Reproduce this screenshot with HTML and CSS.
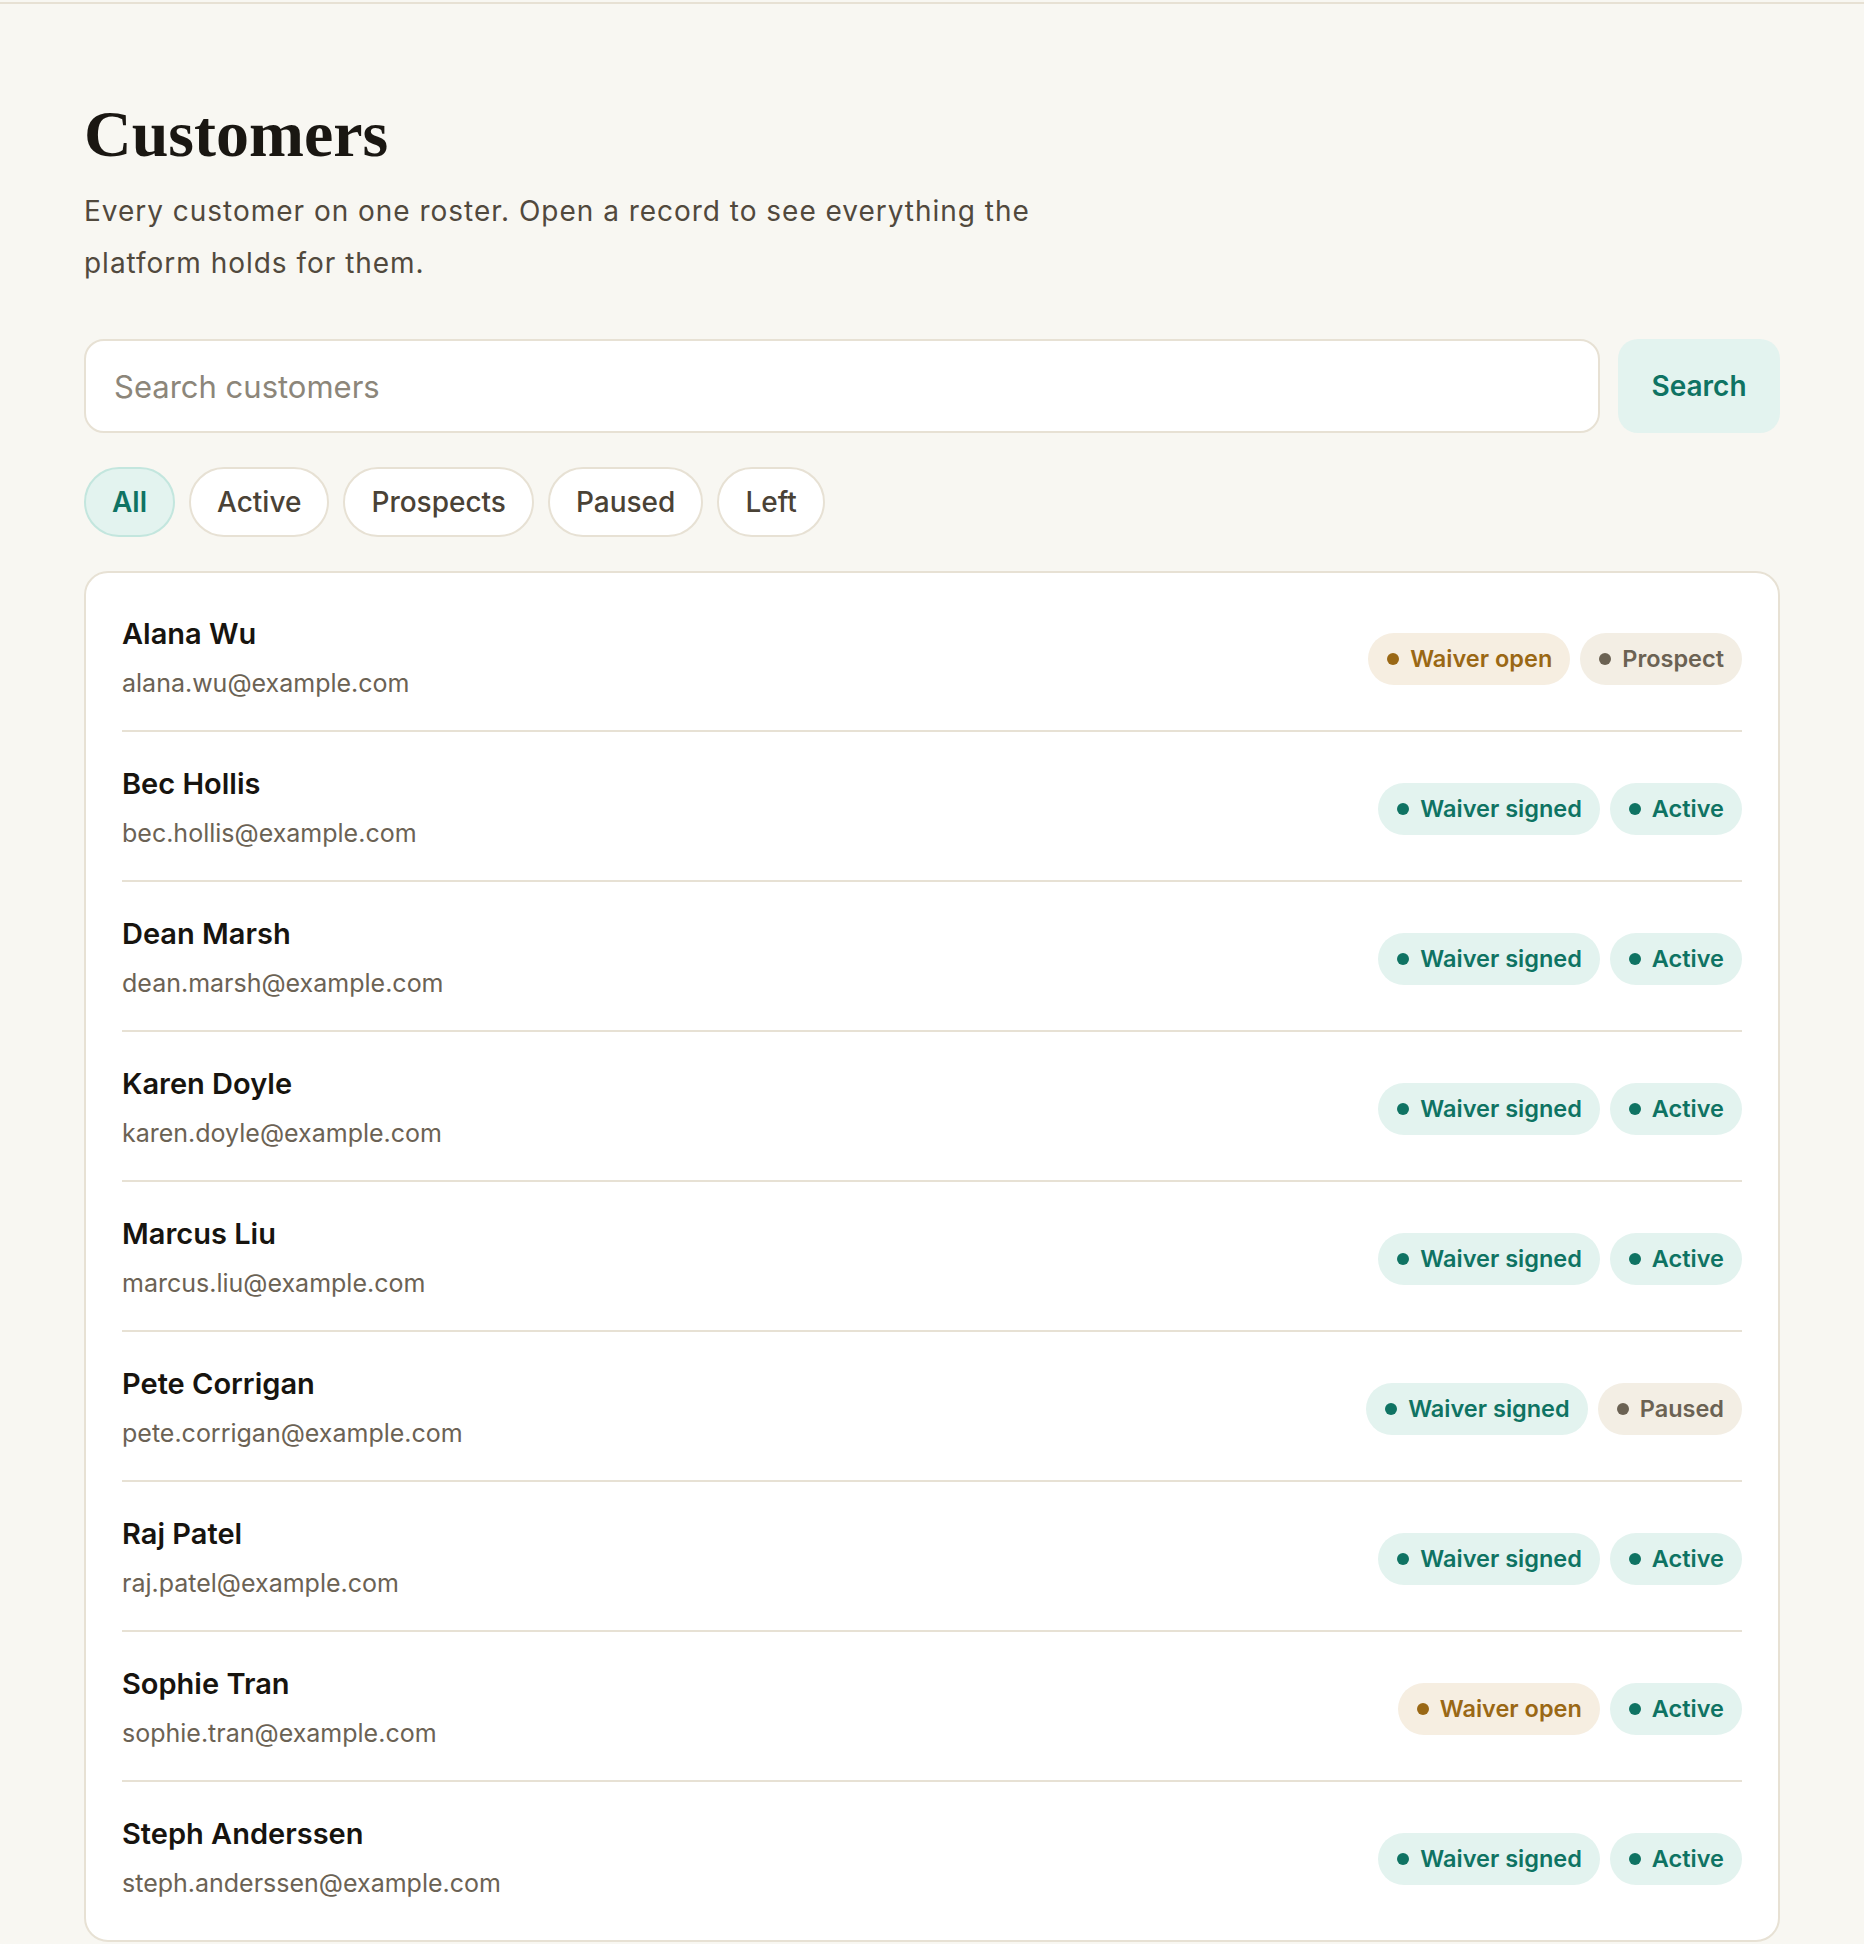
FILE: index.html
```html
<!DOCTYPE html>
<html lang="en">
<head>
  <meta charset="UTF-8" />
  <meta name="viewport" content="width=device-width, initial-scale=1.0" />
  <title>Customers</title>
  <link rel="stylesheet" href="styles.css">
</head>
<body>
  <div class="rule"></div>
  <main class="page">
    <h1>Customers</h1>
    <p class="lede">Every customer on one roster. Open a record to see everything the platform holds for them.</p>

    <form class="search" onsubmit="return false">
      <input type="text" placeholder="Search customers" />
      <button type="submit">Search</button>
    </form>

    <div class="filters">
      <button class="chip on">All</button>
      <button class="chip">Active</button>
      <button class="chip">Prospects</button>
      <button class="chip">Paused</button>
      <button class="chip">Left</button>
    </div>

    <ul class="roster">
      <li class="row">
        <div class="who"><div class="name">Alana Wu</div><div class="email">alana.wu@example.com</div></div>
        <div class="tags"><span class="tag warn">Waiver open</span><span class="tag muted">Prospect</span></div>
      </li>
      <li class="row">
        <div class="who"><div class="name">Bec Hollis</div><div class="email">bec.hollis@example.com</div></div>
        <div class="tags"><span class="tag ok">Waiver signed</span><span class="tag ok">Active</span></div>
      </li>
      <li class="row">
        <div class="who"><div class="name">Dean Marsh</div><div class="email">dean.marsh@example.com</div></div>
        <div class="tags"><span class="tag ok">Waiver signed</span><span class="tag ok">Active</span></div>
      </li>
      <li class="row">
        <div class="who"><div class="name">Karen Doyle</div><div class="email">karen.doyle@example.com</div></div>
        <div class="tags"><span class="tag ok">Waiver signed</span><span class="tag ok">Active</span></div>
      </li>
      <li class="row">
        <div class="who"><div class="name">Marcus Liu</div><div class="email">marcus.liu@example.com</div></div>
        <div class="tags"><span class="tag ok">Waiver signed</span><span class="tag ok">Active</span></div>
      </li>
      <li class="row">
        <div class="who"><div class="name">Pete Corrigan</div><div class="email">pete.corrigan@example.com</div></div>
        <div class="tags"><span class="tag ok">Waiver signed</span><span class="tag muted">Paused</span></div>
      </li>
      <li class="row">
        <div class="who"><div class="name">Raj Patel</div><div class="email">raj.patel@example.com</div></div>
        <div class="tags"><span class="tag ok">Waiver signed</span><span class="tag ok">Active</span></div>
      </li>
      <li class="row">
        <div class="who"><div class="name">Sophie Tran</div><div class="email">sophie.tran@example.com</div></div>
        <div class="tags"><span class="tag warn">Waiver open</span><span class="tag ok">Active</span></div>
      </li>
      <li class="row">
        <div class="who"><div class="name">Steph Anderssen</div><div class="email">steph.anderssen@example.com</div></div>
        <div class="tags"><span class="tag ok">Waiver signed</span><span class="tag ok">Active</span></div>
      </li>
    </ul>
  </main>
</body>
</html>
```

FILE: styles.css
```css
body {
  margin: 0;
  background-color: #f8f7f2;
  color: #1a1712;
  font-family: 'Inter', 'DejaVu Sans', sans-serif;
}

.rule {
  margin-top: 2px;
  height: 2px;
  background-color: #e7e1d4;
}

.page {
  padding: 94px 84px 40px;
}

h1 {
  margin: 0;
  font-family: 'Liberation Serif', serif;
  font-weight: 700;
  font-size: 66px;
  line-height: 72px;
  color: #1a1712;
}

.lede {
  margin: 15px 0 0;
  max-width: 980px;
  font-size: 28px;
  line-height: 52px;
  letter-spacing: 0.035em;
  color: #51493d;
}

/* Search */
.search {
  display: flex;
  gap: 18px;
  margin-top: 50px;
}

.search input {
  flex: 1;
  height: 94px;
  box-sizing: border-box;
  padding: 0 28px;
  border: 2px solid #e7e1d4;
  border-radius: 20px;
  background-color: #fff;
  font-family: 'Inter', sans-serif;
  font-size: 31px;
  color: #1a1712;
}

.search input::placeholder {
  color: #8c867a;
}

.search input:focus {
  outline: none;
  border-color: #bfe4dc;
}

.search button {
  width: 162px;
  height: 94px;
  border: none;
  border-radius: 20px;
  background-color: #e3f3ef;
  color: #0f7363;
  font-family: 'Inter', sans-serif;
  font-size: 28px;
  font-weight: 600;
  cursor: pointer;
}

/* Filter chips */
.filters {
  display: flex;
  gap: 14px;
  margin-top: 34px;
}

.chip {
  height: 70px;
  padding: 0 26px;
  border: 2px solid #e7e1d4;
  border-radius: 999px;
  background-color: #fff;
  color: #4a4236;
  font-family: 'Inter', sans-serif;
  font-size: 28px;
  font-weight: 500;
  cursor: pointer;
}

.chip.on {
  background-color: #e3f3ef;
  border-color: #c3e6de;
  color: #0f7363;
  font-weight: 600;
}

/* Roster card */
.roster {
  list-style: none;
  margin: 34px 0 0;
  padding: 9px 36px 10px;
  background-color: #fff;
  border: 2px solid #e7e1d4;
  border-radius: 24px;
}

.row {
  display: flex;
  justify-content: space-between;
  align-items: center;
  padding: 34px 0 29px;
  border-bottom: 2px solid #e7e1d4;
}

.row:last-child {
  border-bottom: none;
}

.name {
  font-size: 29px;
  line-height: 36px;
  font-weight: 600;
  color: #17140f;
  margin-bottom: 13px;
}

.email {
  font-size: 25px;
  line-height: 36px;
  color: #6b6254;
}

.tags {
  display: flex;
  gap: 10px;
}

.tag {
  display: inline-flex;
  align-items: center;
  gap: 11px;
  height: 52px;
  padding: 0 18px 0 19px;
  border-radius: 999px;
  font-size: 23.5px;
  font-weight: 600;
}

.tag::before {
  content: "";
  width: 12px;
  height: 12px;
  border-radius: 50%;
  background-color: currentColor;
}

.tag.ok {
  background-color: #e3f3ef;
  color: #0f7363;
}

.tag.warn {
  background-color: #f6eee1;
  color: #9a6815;
}

.tag.muted {
  background-color: #f3eee4;
  color: #6b6253;
}
```
